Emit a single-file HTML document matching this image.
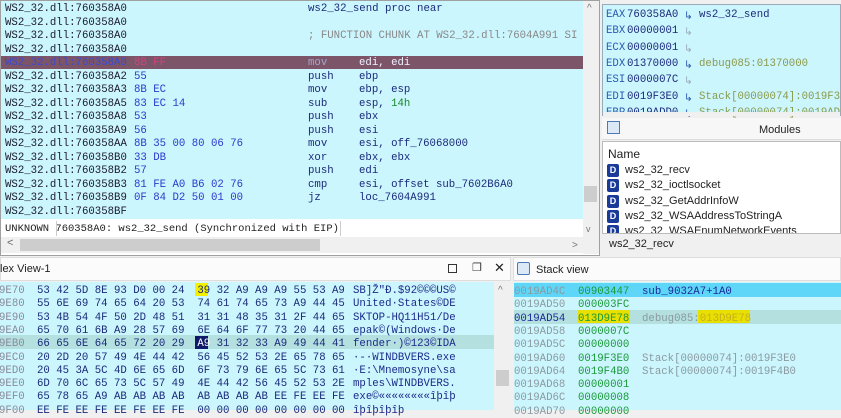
<!DOCTYPE html>
<html><head><meta charset="utf-8"><style>
*{margin:0;padding:0;box-sizing:border-box}
body{width:841px;height:410px;overflow:hidden;background:#f0f0f0;position:relative;font-family:"Liberation Mono",monospace;font-size:10.7px}
.abs{position:absolute}
.m{font-family:"Liberation Mono",monospace;font-size:10.7px;white-space:pre;position:absolute}
.s{font-family:"Liberation Sans",sans-serif;font-size:11px;white-space:pre;position:absolute}
.cy{background:#ccf6fe}
</style></head><body>
<!-- disassembly -->
<div class="abs" style="left:0;top:0;width:600px;height:256px;border:1px solid #a0a0a0;background:#fff"></div>
<div class="abs cy" style="left:1px;top:1px;width:582px;height:218px"></div>
<div class="abs" style="left:1px;top:56px;width:582px;height:13px;background:#7c5668"></div>
<div id="dis"></div>
<div class="abs" style="left:1px;top:219px;width:582px;height:18px;background:#fff"></div>
<div class="m" style="left:5px;top:223px;color:#222;font-size:10.5px">UNKNOWN 760358A0: ws2_32_send (Synchronized with EIP)</div>
<div class="abs" style="left:56px;top:221px;width:1px;height:15px;background:#ccc"></div>
<div class="abs" style="left:340px;top:221px;width:1px;height:15px;background:#ccc"></div>
<div class="abs" style="left:1px;top:237px;width:582px;height:16px;background:#f0f0f0"></div>
<div class="abs" style="left:20px;top:239px;width:300px;height:12px;background:#cdcdcd"></div>
<div class="s" style="left:7px;top:237px;color:#666">&lt;</div>
<div class="abs" style="left:583px;top:1px;width:16px;height:253px;background:#f0f0f0"></div>
<div class="abs" style="left:584px;top:186px;width:13px;height:16px;background:#cdcdcd"></div>
<div class="s" style="left:587px;top:3px;color:#777;font-size:10px">^</div>
<div class="s" style="left:586px;top:224px;color:#777;font-size:9px">v</div>
<div class="s" style="left:572px;top:240px;color:#777;font-size:10px">&gt;</div>

<!-- registers -->
<div class="abs" style="left:602px;top:4px;width:239px;height:112px;border:1px solid #9ab;background:#ccf6fe"></div>
<div id="reg"></div>
<div class="abs" style="left:602px;top:118px;width:239px;height:22px;background:#f7f7f7;border-bottom:1px solid #ddd"></div>
<div class="abs" style="left:607px;top:121px;width:13px;height:13px;border:1px solid #4a7ab8;background:#dbe8f6"></div>
<div class="s" style="left:759px;top:124px;color:#222">Modules</div>
<div class="abs" style="left:602px;top:141px;width:239px;height:93px;background:#fff;border:1px solid #bbb;overflow:hidden">
<div class="s" style="left:5px;top:5px;font-size:12px;color:#222">Name</div>
<div id="mods"></div>
</div>
<div class="s" style="left:609px;top:238px;color:#222">ws2_32_recv</div>

<!-- hex view -->
<div class="abs" style="left:0;top:257px;width:511px;height:24px;background:#fbfbfb;border:1px solid #ddd"></div>
<div class="s" style="left:0;top:263px;color:#222">lex View-1</div>
<div class="abs" style="left:448px;top:264px;width:9px;height:9px;border:1.5px solid #333"></div>
<div class="s" style="left:472px;top:261px;font-size:11px;color:#333">&#x2750;</div>
<div class="s" style="left:494px;top:260px;font-size:13px;color:#222">✕</div>
<div class="abs cy" style="left:0;top:282px;width:494px;height:128px"></div>
<div class="abs" style="left:0;top:335px;width:494px;height:14px;background:#b5e0e0"></div>
<div class="abs" style="left:195px;top:283px;width:13px;height:13px;background:#f4f000"></div>
<div class="abs" style="left:195px;top:336px;width:13px;height:13px;background:#10186a"></div>
<div id="hex"></div>
<div class="abs" style="left:494px;top:282px;width:17px;height:128px;background:#f0f0f0"></div>
<div class="abs" style="left:496px;top:370px;width:13px;height:16px;background:#cdcdcd"></div>
<div class="s" style="left:498px;top:285px;color:#777;font-size:10px">^</div>

<!-- stack view -->
<div class="abs" style="left:513px;top:257px;width:328px;height:24px;background:#fbfbfb;border:1px solid #ddd"></div>
<div class="abs" style="left:517px;top:262px;width:13px;height:13px;border:1px solid #4a7ab8;background:#dbe8f6;border-radius:2px"></div>
<div class="s" style="left:536px;top:264px;color:#222">Stack view</div>
<div class="abs cy" style="left:514px;top:282px;width:327px;height:128px"></div>
<div class="abs" style="left:514px;top:283px;width:327px;height:14px;background:#5ed6f8"></div>
<div class="abs" style="left:514px;top:310px;width:327px;height:14px;background:#b5e0e0"></div>
<div class="abs" style="left:578px;top:310px;width:52px;height:13px;background:#e8e000"></div>
<div class="abs" style="left:698px;top:310px;width:52px;height:13px;background:#e8e000"></div>
<div id="stk"></div>

<script>
function put(id,arr){document.getElementById(id).innerHTML=arr.join('');}
var o=[];
var rows=[
["WS2_32.dll:760358A0","","",""],["WS2_32.dll:760358A0","","",""],["WS2_32.dll:760358A0","","",""],["WS2_32.dll:760358A0","","",""],
["WS2_32.dll:760358A0","8B FF","mov","edi, edi"],["WS2_32.dll:760358A2","55","push","ebp"],["WS2_32.dll:760358A3","8B EC","mov","ebp, esp"],
["WS2_32.dll:760358A5","83 EC 14","sub","esp, <g>14h</g>"],["WS2_32.dll:760358A8","53","push","ebx"],["WS2_32.dll:760358A9","56","push","esi"],
["WS2_32.dll:760358AA","8B 35 00 80 06 76","mov","esi, off_76068000"],["WS2_32.dll:760358B0","33 DB","xor","ebx, ebx"],
["WS2_32.dll:760358B2","57","push","edi"],["WS2_32.dll:760358B3","81 FE A0 B6 02 76","cmp","esi, offset sub_7602B6A0"],
["WS2_32.dll:760358B9","0F 84 D2 50 01 00","jz","loc_7604A991"],["WS2_32.dll:760358BF","","",""]];
rows.forEach(function(r,i){var y=3+i*13.5;var h=i==4;
var ac=h?'#3a4ad0':'#1a1a2a',bc=h?'#d04080':'#2a3acc',mc=h?'#a0a8d0':'#1a2a7a',oc=h?'#f0f0ff':'#1a2a7a';
o.push('<div class="m" style="left:5px;top:'+y+'px;color:'+ac+'">'+r[0]+'</div>');
o.push('<div class="m" style="left:134px;top:'+y+'px;color:'+bc+'">'+r[1]+'</div>');
o.push('<div class="m" style="left:308px;top:'+y+'px;color:'+mc+'">'+r[2]+'</div>');
o.push('<div class="m" style="left:359px;top:'+y+'px;color:'+oc+'">'+r[3].replace('<g>','<span style="color:#1a8a2a">').replace('</g>','</span>')+'</div>');});
o.push('<div class="m" style="left:308px;top:3px;color:#1a2a7a">ws2_32_send proc near</div>');
o.push('<div class="m" style="left:308px;top:30px;color:#888">; FUNCTION CHUNK AT WS2_32.dll:7604A991 SI</div>');
put('dis',o);
o=[];
var regs=[["EAX","760358A0","ws2_32_send","#1a2a7a"],["EBX","00000001","",""],["ECX","00000001","",""],["EDX","01370000","debug085:01370000","#8a9a4a"],["ESI","0000007C","",""],["EDI","0019F3E0","Stack[00000074]:0019F3E0","#8a9a4a"],["EBP","0019ADD0","Stack[00000074]:0019ADD0","#8a9a4a"]];
regs.forEach(function(r,i){var y=9+i*16.3;
o.push('<div class="m" style="left:606px;top:'+y+'px;color:#2a5ab0">'+r[0]+'</div>');
o.push('<div class="m" style="left:627px;top:'+y+'px;color:#1a2a7a">'+r[1]+'</div>');
o.push('<div class="m" style="left:684px;top:'+y+'px;color:'+(r[2]?'#2a5ab0':'#9ab')+'">&#x21b3;</div>');
if(r[2])o.push('<div class="m" style="left:699px;top:'+y+'px;color:'+r[3]+'">'+r[2]+'</div>');});
o.push('<div class="abs" style="left:603px;top:112px;width:237px;height:4px;background:#f0f0f0"></div>');
put('reg',o);
o=[];
["ws2_32_recv","ws2_32_ioctlsocket","ws2_32_GetAddrInfoW","ws2_32_WSAAddressToStringA","ws2_32_WSAEnumNetworkEvents"].forEach(function(n,i){var y=22+i*15.3;
o.push('<div class="abs" style="left:4px;top:'+y+'px;width:12px;height:13px;background:#1a3a9a;border-radius:2px;color:#fff;font:bold 9px Liberation Sans,sans-serif;text-align:center;line-height:13px">D</div>');
o.push('<div class="s" style="left:22px;top:'+(y)+'px;color:#222">'+n+'</div>');});
put('mods',o);
o=[];
var hx=[["9E70","53 42 5D 8E 93 D0 00 24  39 32 A9 A9 A9 55 53 A9","SB]Ž\"Đ.$92©©©US©"],
["9E80","55 6E 69 74 65 64 20 53  74 61 74 65 73 A9 44 45","United·States©DE"],
["9E90","53 4B 54 4F 50 2D 48 51  31 31 48 35 31 2F 44 65","SKTOP-HQ11H51/De"],
["9EA0","65 70 61 6B A9 28 57 69  6E 64 6F 77 73 20 44 65","epak©(Windows·De"],
["9EB0","66 65 6E 64 65 72 20 29  <w>A9</w> 31 32 33 A9 49 44 41","fender·)©123©IDA"],
["9EC0","20 2D 20 57 49 4E 44 42  56 45 52 53 2E 65 78 65","·-·WINDBVERS.exe"],
["9ED0","20 45 3A 5C 4D 6E 65 6D  6F 73 79 6E 65 5C 73 61","·E:\\Mnemosyne\\sa"],
["9EE0","6D 70 6C 65 73 5C 57 49  4E 44 42 56 45 52 53 2E","mples\\WINDBVERS."],
["9EF0","65 78 65 A9 AB AB AB AB  AB AB AB AB EE FE EE FE","exe©««««««««îþîþ"],
["9F00","EE FE EE FE EE FE EE FE  00 00 00 00 00 00 00 00","îþîþîþîþ"]];
hx.forEach(function(r,i){var y=285+i*13.3;
o.push('<div class="m" style="left:-1px;top:'+y+'px;color:#8a8a9a">'+r[0]+'</div>');
o.push('<div class="m" style="left:37px;top:'+y+'px;color:#1a2a7a">'+r[1].replace('<w>','<span style="color:#fff">').replace('</w>','</span>')+'</div>');
o.push('<div class="m" style="left:353px;top:'+y+'px;color:#1a2a8a">'+r[2].replace(/&/g,'&amp;').replace(/</g,'&lt;')+'</div>');});
put('hex',o);
o=[];
var st=[["0019AD4C","00903447","sub_9032A7+1A0","#1a2a9a"],["0019AD50","000003FC","",""],["0019AD54","013D9E78","debug085:<y>013D9E78</y>","#8a9aa0"],
["0019AD58","0000007C","",""],["0019AD5C","00000000","",""],["0019AD60","0019F3E0","Stack[00000074]:0019F3E0","#8a9aa0"],["0019AD64","0019F4B0","Stack[00000074]:0019F4B0","#8a9aa0"],
["0019AD68","00000001","",""],["0019AD6C","00000008","",""],["0019AD70","00000000","",""]];
st.forEach(function(r,i){var y=286+i*13.3;
o.push('<div class="m" style="left:514px;top:'+y+'px;color:'+(i==2?'#1a2a9a':'#8a9aa0')+'">'+r[0]+'</div>');
o.push('<div class="m" style="left:578px;top:'+y+'px;color:#1a9a3a">'+r[1]+'</div>');
if(r[2])o.push('<div class="m" style="left:642px;top:'+y+'px;color:'+r[3]+'">'+r[2].replace('<y>','<span style="color:#c8b020">').replace('</y>','</span>')+'</div>');});
put('stk',o);
</script>
</body></html>
